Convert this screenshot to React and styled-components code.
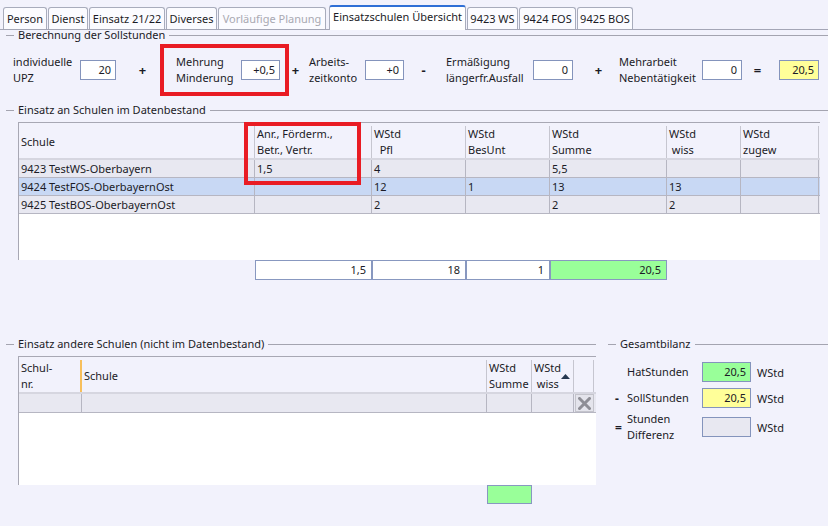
import React from 'react';
import styled, { createGlobalStyle } from 'styled-components';

const GlobalStyle = createGlobalStyle`
  html, body {
    margin: 0;
    padding: 0;
    background: #f2f2fc;
  }
  body {
    font-family: 'Noto Sans', 'Open Sans', sans-serif;
    font-size: 11px;
    color: #1b1b26;
  }
`;

const Page = styled.div`
  width: 828px;
  height: 526px;
  overflow: hidden;
  background: #f2f2fc;
`;

const TabBar = styled.div`
  display: flex;
  align-items: flex-end;
  gap: 1px;
  height: 30px;
  padding-left: 3px;
  box-sizing: border-box;
  border-bottom: 1px solid #a4a6b6;
`;

const Tab = styled.div`
  flex: none;
  width: ${(p) => p.w}px;
  height: ${(p) => (p.active ? 25 : 22)}px;
  margin: 0 0 ${(p) => (p.active ? -1 : 0)}px ${(p) => (p.active ? 2 : 0)}px;
  box-sizing: border-box;
  border: 1px solid #a8acbc;
  border-top: ${(p) => (p.active ? '2px solid #2f6fd6' : '1px solid #a8acbc')};
  border-bottom: none;
  border-radius: 3px 3px 0 0;
  background: ${(p) => (p.active ? '#ffffff' : '#fbfbff')};
  color: ${(p) => (p.disabled ? '#a9a9b2' : '#1b1b26')};
  line-height: ${(p) => (p.active ? 19 : 21)}px;
  text-align: center;
  white-space: nowrap;
  overflow: hidden;
`;

const Legend = styled.div`
  display: flex;
  align-items: center;
  height: 10px;
  line-height: 10px;
  margin-top: ${(p) => p.mt || 0}px;
  padding-left: ${(p) => (p.pl === undefined ? 6 : p.pl)}px;
  white-space: nowrap;
  &::before {
    content: '';
    width: 8px;
    height: 1px;
    margin-right: 4px;
    background: #a4a4b0;
  }
  &::after {
    content: '';
    flex: 1;
    height: 1px;
    margin-left: 4px;
    background: #a4a4b0;
  }
`;

const CalcRow = styled.div`
  display: flex;
  align-items: center;
  height: 52px;
  margin-top: 4px;
  padding-left: 13px;
`;

const Label = styled.div`
  flex: none;
  width: ${(p) => p.w}px;
  line-height: 16px;
  white-space: nowrap;
`;

const Field = styled.div`
  flex: none;
  width: ${(p) => p.w}px;
  height: 20px;
  box-sizing: border-box;
  border: 1px solid #8494bc;
  background: ${(p) => p.bg || '#ffffff'};
  padding-right: 4px;
  text-align: right;
  line-height: 18px;
`;

const Op = styled.div`
  flex: none;
  width: 13px;
  margin: 0 ${(p) => p.mr}px 0 ${(p) => p.ml}px;
  text-align: center;
  font-size: 13px;
  font-weight: 700;
`;

const Highlight = styled.div`
  flex: none;
  display: flex;
  align-items: center;
  height: 52px;
  box-sizing: border-box;
  border: 4px solid #e91c24;
  padding: 0 5px 0 12px;
`;

const Table = styled.div`
  position: relative;
  margin: 7px 0 0 18px;
  width: ${(p) => p.w}px;
  height: ${(p) => p.h}px;
  box-sizing: border-box;
  border-top: 1px solid #a8a8b4;
  border-left: 1px solid #a8a8b4;
  background: #ffffff;
`;

const Grid = styled.div`
  display: grid;
  grid-template-columns: ${(p) => p.cols};
`;

const HeadRow = styled(Grid)`
  height: ${(p) => p.h}px;
  box-sizing: border-box;
  background: #f2f2fc;
  border-bottom: 2px solid #d6d6e0;
`;

const HeadCell = styled.div`
  display: flex;
  align-items: center;
  justify-content: space-between;
  margin: 3px 0 2px;
  padding: 0 3px 0 2px;
  border-right: ${(p) => (p.accent ? '2px solid #f7bf5c' : '1px solid #c6c6d0')};
  line-height: 16px;
  white-space: nowrap;
`;

const Row = styled(Grid)`
  height: ${(p) => p.h}px;
  box-sizing: border-box;
  background: ${(p) => (p.selected ? '#c8d8f4' : '#e8e8f1')};
  border-bottom: 1px solid #b6b6c2;
`;

const Cell = styled.div`
  display: flex;
  align-items: center;
  padding-left: 2px;
  border-right: 1px solid #b6b6c2;
  white-space: nowrap;
`;

const SumRow = styled(Grid)`
  height: ${(p) => p.h}px;
  margin-left: 19px;
`;

const SumCell = styled.div`
  box-sizing: border-box;
  border: 1px solid #8898c0;
  background: ${(p) => p.bg || '#ffffff'};
  padding-right: 5px;
  text-align: right;
  line-height: 18px;
`;

const RedFrame = styled.div`
  position: absolute;
  left: ${(p) => p.x}px;
  top: ${(p) => p.y}px;
  width: ${(p) => p.w}px;
  height: ${(p) => p.h}px;
  box-sizing: border-box;
  border: 4px solid #e91c24;
  pointer-events: none;
`;

const Bottom = styled.div`
  display: flex;
  gap: 12px;
  margin-top: 59px;
`;

const LeftCol = styled.div`
  flex: none;
  width: 596px;
`;

const RightCol = styled.div`
  flex: 1;
`;

const ClearButton = styled.div`
  display: flex;
  align-items: center;
  justify-content: center;
  margin-left: 1px;
  background: #e4e4ec;
  border: 1px solid #c4c4cc;
`;

const BilanzRow = styled.div`
  display: flex;
  align-items: center;
  height: ${(p) => p.h || 20}px;
  margin-top: ${(p) => p.mt}px;
  padding-left: 7px;
`;

const Sign = styled.div`
  flex: none;
  width: 12px;
  font-weight: 700;
  font-size: 12px;
`;

const Unit = styled.div`
  margin-left: 6px;
`;

const cols1 = '236px 117px 94px 84px 117px 74px 78px';
const cols2 = '63px 405px 45px 42px 20px';

const tabs = [
  { label: 'Person', w: 44 },
  { label: 'Dienst', w: 40 },
  { label: 'Einsatz 21/22', w: 76 },
  { label: 'Diverses', w: 51 },
  { label: 'Vorläufige Planung', w: 108, disabled: true },
  { label: 'Einsatzschulen Übersicht', w: 137, active: true },
  { label: '9423 WS', w: 51 },
  { label: '9424 FOS', w: 57 },
  { label: '9425 BOS', w: 56 },
];

const schools = [
  { name: '9423 TestWS-Oberbayern', anr: '1,5', pfl: '4', bes: '', sum: '5,5', wiss: '', zug: '' },
  { name: '9424 TestFOS-OberbayernOst', anr: '', pfl: '12', bes: '1', sum: '13', wiss: '13', zug: '', selected: true },
  { name: '9425 TestBOS-OberbayernOst', anr: '', pfl: '2', bes: '', sum: '2', wiss: '2', zug: '' },
];

const TwoLine = ({ a, b }) => (
  <div>
    <div>{a}</div>
    <div>{b}</div>
  </div>
);

const SortArrow = () => (
  <svg width="9" height="5" viewBox="0 0 9 5">
    <path d="M0 5 L4.5 0 L9 5 Z" fill="#263850" />
  </svg>
);

const ClearIcon = () => (
  <svg width="13" height="13" viewBox="0 0 13 13">
    <path d="M1.5 1.5 L11.5 11.5 M11.5 1.5 L1.5 11.5" stroke="#8e8e96" strokeWidth="3" strokeLinecap="square" />
  </svg>
);

export default function App() {
  return (
    <Page>
      <GlobalStyle />
      <TabBar>
        {tabs.map((t) => (
          <Tab key={t.label} w={t.w} active={t.active} disabled={t.disabled}>
            {t.label}
          </Tab>
        ))}
      </TabBar>

      <Legend>Berechnung der Sollstunden</Legend>
      <CalcRow>
        <Label w={67}>individuelle<br />UPZ</Label>
        <Field w={36}>20</Field>
        <Op ml={20} mr={11}>+</Op>
        <Highlight>
          <Label w={65}>Mehrung<br />Minderung</Label>
          <Field w={39}>+0,5</Field>
        </Highlight>
        <Op ml={0} mr={7}>+</Op>
        <Label w={56}>Arbeits-<br />zeitkonto</Label>
        <Field w={39}>+0</Field>
        <Op ml={13} mr={16}>-</Op>
        <Label w={87}>Ermäßigung<br />längerfr.Ausfall</Label>
        <Field w={40}>0</Field>
        <Op ml={19} mr={14}>+</Op>
        <Label w={83}>Mehrarbeit<br />Nebentätigkeit</Label>
        <Field w={40}>0</Field>
        <Op ml={9} mr={15}>=</Op>
        <Field w={40} bg="#ffff99">20,5</Field>
      </CalcRow>

      <Legend mt={9}>Einsatz an Schulen im Datenbestand</Legend>
      <Table w={802} h={138}>
        <HeadRow cols={cols1} h={37}>
          <HeadCell>Schule</HeadCell>
          <HeadCell><TwoLine a="Anr., Förderm.," b="Betr., Vertr." /></HeadCell>
          <HeadCell><TwoLine a="WStd" b={'\u00a0\u00a0Pfl'} /></HeadCell>
          <HeadCell><TwoLine a="WStd" b="BesUnt" /></HeadCell>
          <HeadCell><TwoLine a="WStd" b="Summe" /></HeadCell>
          <HeadCell><TwoLine a="WStd" b={'\u00a0wiss'} /></HeadCell>
          <HeadCell><TwoLine a="WStd" b="zugew" /></HeadCell>
        </HeadRow>
        {schools.map((s) => (
          <Row key={s.name} cols={cols1} h={18} selected={s.selected}>
            <Cell>{s.name}</Cell>
            <Cell>{s.anr}</Cell>
            <Cell>{s.pfl}</Cell>
            <Cell>{s.bes}</Cell>
            <Cell>{s.sum}</Cell>
            <Cell>{s.wiss}</Cell>
            <Cell>{s.zug}</Cell>
          </Row>
        ))}
        <RedFrame x={225} y={-1} w={117} h={63} />
      </Table>
      <SumRow cols={cols1} h={20}>
        <div />
        <SumCell>1,5</SumCell>
        <SumCell>18</SumCell>
        <SumCell>1</SumCell>
        <SumCell bg="#99ff99">20,5</SumCell>
      </SumRow>

      <Bottom>
        <LeftCol>
          <Legend>Einsatz andere Schulen (nicht im Datenbestand)</Legend>
          <Table w={578} h={129}>
            <HeadRow cols={cols2} h={37}>
              <HeadCell accent><TwoLine a="Schul-" b="nr." /></HeadCell>
              <HeadCell>Schule</HeadCell>
              <HeadCell><TwoLine a="WStd" b="Summe" /></HeadCell>
              <HeadCell><TwoLine a="WStd" b={'\u00a0wiss'} /><SortArrow /></HeadCell>
              <HeadCell />
            </HeadRow>
            <Row cols={cols2} h={19}>
              <Cell />
              <Cell />
              <Cell />
              <Cell />
              <ClearButton><ClearIcon /></ClearButton>
            </Row>
          </Table>
          <SumRow cols={cols2} h={19}>
            <div />
            <div />
            <SumCell bg="#99ff99" />
          </SumRow>
        </LeftCol>

        <RightCol>
          <Legend pl={0}>Gesamtbilanz</Legend>
          <BilanzRow mt={13}>
            <Sign />
            <Label w={75}>HatStunden</Label>
            <Field w={49} bg="#99ff99">20,5</Field>
            <Unit>WStd</Unit>
          </BilanzRow>
          <BilanzRow mt={6}>
            <Sign>-</Sign>
            <Label w={75}>SollStunden</Label>
            <Field w={49} bg="#ffff99">20,5</Field>
            <Unit>WStd</Unit>
          </BilanzRow>
          <BilanzRow mt={3} h={32}>
            <Sign>=</Sign>
            <Label w={75}>Stunden<br />Differenz</Label>
            <Field w={49} bg="#e8e8f1" />
            <Unit>WStd</Unit>
          </BilanzRow>
        </RightCol>
      </Bottom>
    </Page>
  );
}
